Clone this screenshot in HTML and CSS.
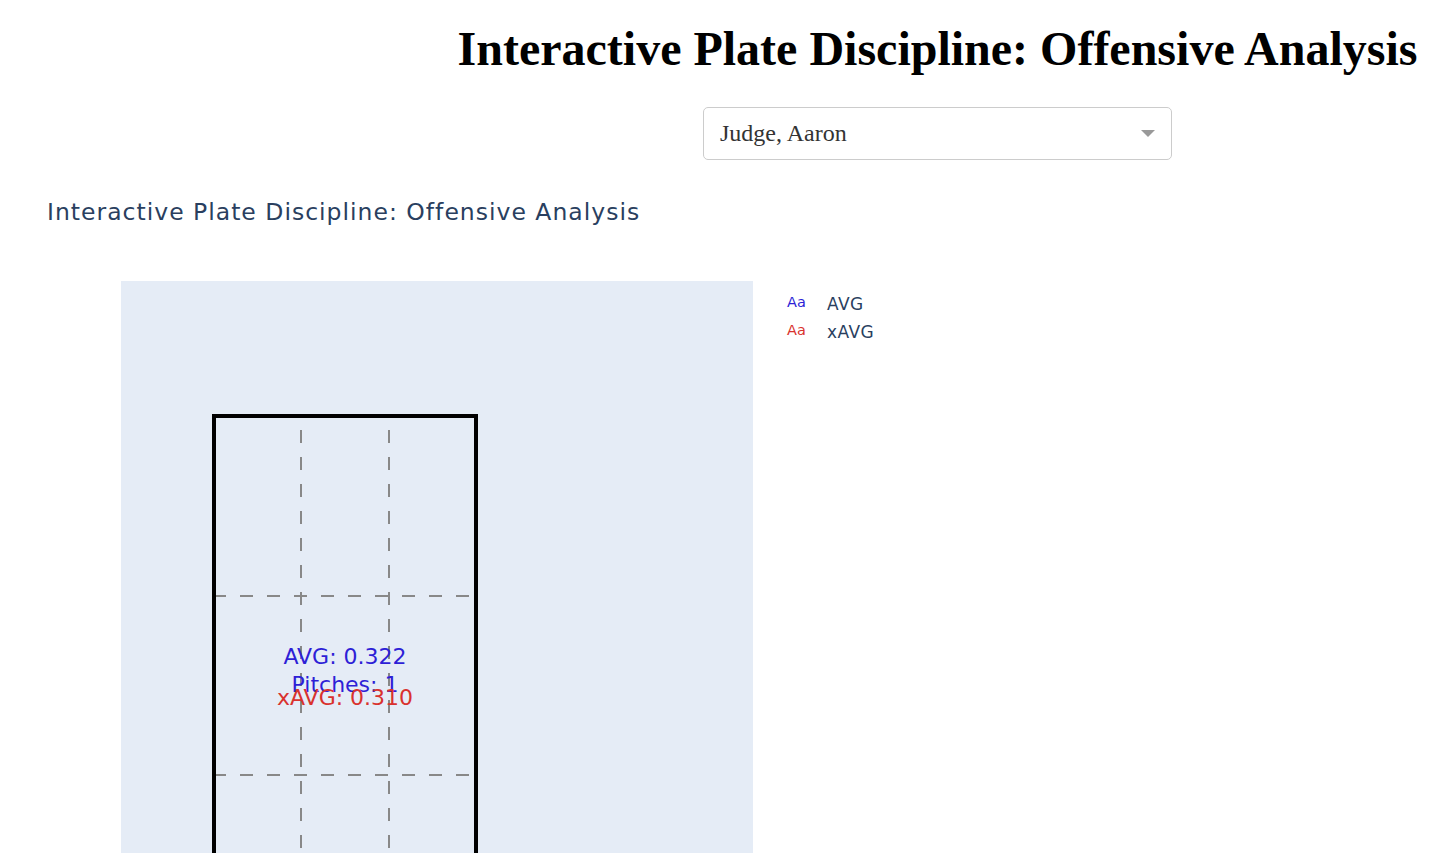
FILE: index.html
```html
<!DOCTYPE html>
<html>
<head>
<meta charset="utf-8">
<link rel="stylesheet" href="styles.css">
</head>
<body>
<div class="header">
  <h1 class="main-title">Interactive Plate Discipline: Offensive Analysis</h1>
  <div class="dropdown">
    <span class="dropdown-value">Judge, Aaron</span>
    <span class="dropdown-arrow"></span>
  </div>
</div>
<div class="graph">
  <svg class="chart" width="1450" height="700" viewBox="0 0 1450 700" xmlns="http://www.w3.org/2000/svg">
    <text class="chart-title" x="47" y="40">Interactive Plate Discipline: Offensive Analysis</text>
    <rect x="121" y="101" width="632" height="620" fill="#e5ecf6"/>
    <g stroke="#888" stroke-width="2" stroke-dasharray="13 14" fill="none">
      <line x1="213" y1="416" x2="475" y2="416"/>
      <line x1="213" y1="595" x2="475" y2="595"/>
      <line x1="301" y1="250" x2="301" y2="700"/>
      <line x1="389" y1="250" x2="389" y2="700"/>
    </g>
    <rect x="214" y="236" width="262" height="540" fill="none" stroke="#000" stroke-width="4"/>
    <g class="annot" text-anchor="middle">
      <text x="345" y="484" fill="#2e1fd6">AVG: 0.322</text>
      <text x="345" y="512" fill="#2e1fd6">Pitches: 1</text>
      <text x="345" y="525" fill="#d9322e">xAVG: 0.310</text>
    </g>
    <g class="legend">
      <text class="legend-sym" x="787" y="127" fill="#2e1fd6">Aa</text>
      <text class="legend-label" x="827" y="130">AVG</text>
      <text class="legend-sym" x="787" y="155" fill="#d9322e">Aa</text>
      <text class="legend-label" x="827" y="158">xAVG</text>
    </g>
  </svg>
</div>
</body>
</html>
```
FILE: styles.css
```css
html, body {
  margin: 0;
  padding: 0;
  background: #fff;
  overflow: hidden;
}
body {
  width: 1450px;
  height: 853px;
}
.header {
  margin-left: 425px;
  width: 1025px;
  display: flex;
  flex-direction: column;
  align-items: center;
}
.main-title {
  font-family: "Liberation Serif", "Times New Roman", serif;
  font-weight: bold;
  font-size: 48px;
  line-height: 55px;
  margin: 21px 0 0 0;
  color: #000;
  white-space: nowrap;
}
.dropdown {
  margin-top: 31px;
  height: 51px;
  border: 1px solid #ccc;
  border-radius: 5px;
  display: flex;
  align-items: center;
  justify-content: space-between;
  padding: 0 16px 0 16px;
  box-sizing: content-box;
  width: 435px;
}
.dropdown-value {
  font-family: "Liberation Serif", "Times New Roman", serif;
  font-size: 24px;
  color: #333;
}
.dropdown-arrow {
  width: 0;
  height: 0;
  border-left: 7px solid transparent;
  border-right: 7px solid transparent;
  border-top: 7px solid #999;
}
.graph {
  margin-top: 20px;
  height: 700px;
}
.chart {
  display: block;
}
.chart-title {
  font-family: "DejaVu Sans", Verdana, sans-serif;
  font-size: 23.5px;
  letter-spacing: 1px;
  fill: #2a3f5f;
}
.annot text {
  font-family: "DejaVu Sans", Verdana, sans-serif;
  font-size: 22px;
}
.legend-sym {
  font-family: "DejaVu Sans", Verdana, sans-serif;
  font-size: 14.5px;
}
.legend-label {
  font-family: "DejaVu Sans", Verdana, sans-serif;
  font-size: 17px;
  letter-spacing: 0.4px;
  fill: #2a3f5f;
}
```
